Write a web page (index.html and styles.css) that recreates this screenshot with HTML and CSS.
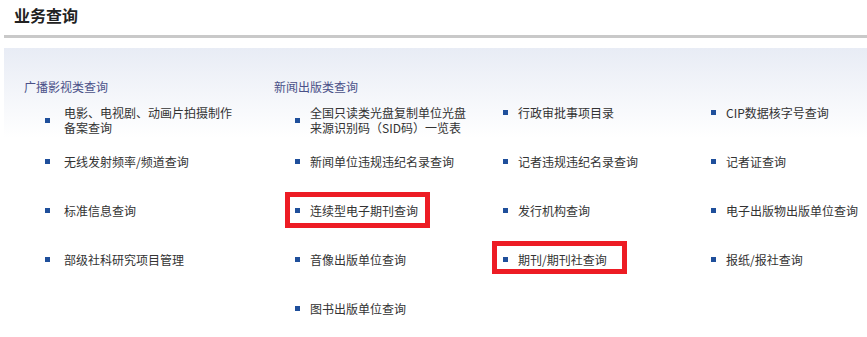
FILE: index.html
```html
<!DOCTYPE html>
<html lang="zh-CN">
<head>
    <meta charset="UTF-8">
    <meta name="viewport" content="width=device-width, initial-scale=1.0">
    <title>业务查询</title>
    <link rel="stylesheet" href="styles.css">
</head>
<body>
    <div class="head">
        <h2 class="title">业务查询</h2>
    </div>
    <div class="panel">
        <div class="group group-radio">
            <h3>广播影视类查询</h3>
            <ul class="links">
                <li><a href="#"><span class="dot"></span><span class="text">电影、电视剧、动画片拍摄制作备案查询</span></a></li>
                <li><a href="#"><span class="dot"></span><span class="text">无线发射频率/频道查询</span></a></li>
                <li><a href="#"><span class="dot"></span><span class="text">标准信息查询</span></a></li>
                <li><a href="#"><span class="dot"></span><span class="text">部级社科研究项目管理</span></a></li>
            </ul>
        </div>
        <div class="group group-press">
            <h3>新闻出版类查询</h3>
            <ul class="links">
                <li><a href="#"><span class="dot"></span><span class="text">全国只读类光盘复制单位光盘来源识别码（SID码）一览表</span></a></li>
                <li><a href="#"><span class="dot"></span><span class="text">行政审批事项目录</span></a></li>
                <li><a href="#"><span class="dot"></span><span class="text">CIP数据核字号查询</span></a></li>
                <li><a href="#"><span class="dot"></span><span class="text">新闻单位违规违纪名录查询</span></a></li>
                <li><a href="#"><span class="dot"></span><span class="text">记者违规违纪名录查询</span></a></li>
                <li><a href="#"><span class="dot"></span><span class="text">记者证查询</span></a></li>
                <li class="marked marked-a"><a href="#"><span class="dot"></span><span class="text">连续型电子期刊查询</span></a></li>
                <li><a href="#"><span class="dot"></span><span class="text">发行机构查询</span></a></li>
                <li><a href="#"><span class="dot"></span><span class="text">电子出版物出版单位查询</span></a></li>
                <li><a href="#"><span class="dot"></span><span class="text">音像出版单位查询</span></a></li>
                <li class="marked marked-b"><a href="#"><span class="dot"></span><span class="text">期刊/期刊社查询</span></a></li>
                <li><a href="#"><span class="dot"></span><span class="text">报纸/报社查询</span></a></li>
                <li><a href="#"><span class="dot"></span><span class="text">图书出版单位查询</span></a></li>
            </ul>
        </div>
    </div>
</body>
</html>
```

FILE: styles.css
```css
body {
    margin: 0;
    font-family: "Noto Sans CJK SC", "Liberation Sans", sans-serif;
    font-size: 12px;
    color: #333;
    background-color: #fff;
}
.head {
    margin-left: 4px;
    padding: 5px 0 10px 10px;
    border-bottom: 3px solid #c9c9c9;
}
.title {
    margin: 0;
    font-size: 16px;
    line-height: 20px;
    font-weight: bold;
    color: #222;
}
.panel {
    display: flex;
    margin: 10px 0 0 4px;
    padding: 31px 0 0 20px;
    height: 258px;
    background: linear-gradient(#e8ecf5, #fff 90px);
}
.group h3 {
    margin: 0;
    font-size: 12px;
    line-height: 15px;
    font-weight: normal;
    color: #4a5088;
}
.group-radio {
    flex: none;
    width: 250px;
}
.group-press {
    flex: 1;
    min-width: 0;
}
.links {
    list-style: none;
    margin: 11px 0 0;
    padding: 0 0 0 21px;
    display: grid;
    grid-auto-rows: 49px;
}
.group-press .links {
    grid-template-columns: 208px 208px 150px;
}
.links li {
    position: relative;
    white-space: nowrap;
}
.links a {
    display: flex;
    align-items: center;
    color: #333;
    text-decoration: none;
    line-height: 15px;
}
.dot {
    flex: none;
    width: 5px;
    height: 5px;
    margin-right: 10px;
    background-color: #1f4f9b;
}
.group-radio .dot {
    margin-right: 14px;
}
.group-radio .text {
    white-space: normal;
    max-width: 175px;
}
.group-press .text {
    white-space: normal;
    max-width: 160px;
}
.group-press li:nth-child(3n) .text {
    white-space: nowrap;
    max-width: none;
}
.marked::after {
    content: "";
    position: absolute;
    box-sizing: border-box;
    border: 5px solid #ed1c24;
}
.marked-a::after {
    left: -10px;
    top: -11px;
    width: 145px;
    height: 36px;
}
.marked-b::after {
    left: -11px;
    top: -11px;
    width: 135px;
    height: 33px;
}
```
